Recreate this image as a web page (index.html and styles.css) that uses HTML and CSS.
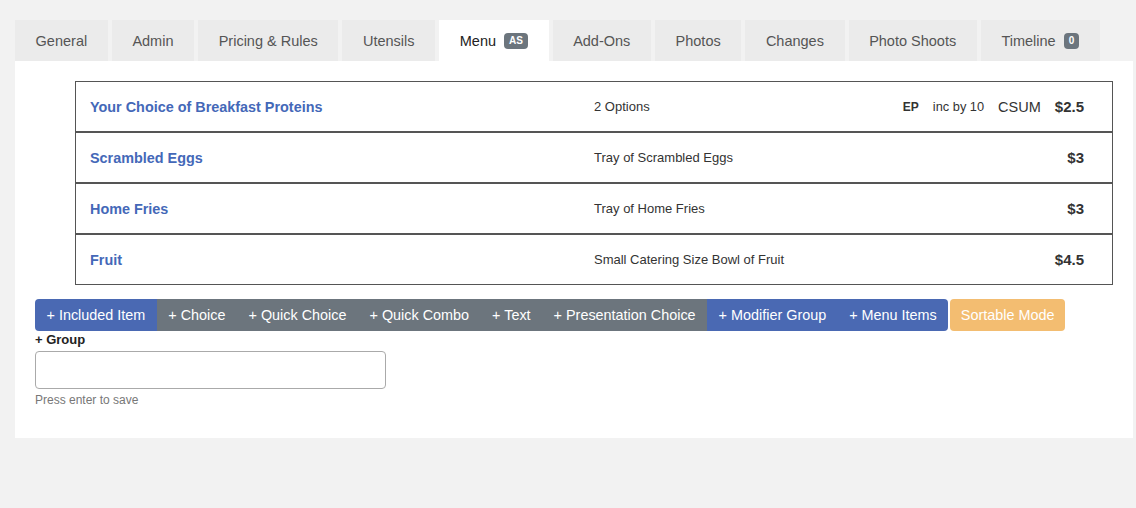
FILE: index.html
```html
<!DOCTYPE html>
<html>
<head>
<meta charset="utf-8">
<link rel="stylesheet" href="styles.css">
</head>
<body>
<div class="page">
  <div class="tabs">
    <div class="tab">General</div>
    <div class="tab">Admin</div>
    <div class="tab">Pricing &amp; Rules</div>
    <div class="tab">Utensils</div>
    <div class="tab active">Menu <span class="badge">AS</span></div>
    <div class="tab">Add-Ons</div>
    <div class="tab">Photos</div>
    <div class="tab">Changes</div>
    <div class="tab">Photo Shoots</div>
    <div class="tab">Timeline <span class="badge">0</span></div>
  </div>
  <div class="panel">
    <div class="items">
      <div class="row">
        <div class="name">Your Choice of Breakfast Proteins</div>
        <div class="desc">2 Options</div>
        <div class="meta">
          <span class="ep">EP</span>
          <span class="inc">inc by 10</span>
          <span class="csum">CSUM</span>
          <span class="price">$2.5</span>
        </div>
      </div>
      <div class="row">
        <div class="name">Scrambled Eggs</div>
        <div class="desc">Tray of Scrambled Eggs</div>
        <div class="meta"><span class="price">$3</span></div>
      </div>
      <div class="row">
        <div class="name">Home Fries</div>
        <div class="desc">Tray of Home Fries</div>
        <div class="meta"><span class="price">$3</span></div>
      </div>
      <div class="row">
        <div class="name">Fruit</div>
        <div class="desc">Small Catering Size Bowl of Fruit</div>
        <div class="meta"><span class="price">$4.5</span></div>
      </div>
    </div>
    <div class="actions">
      <div class="btn blue first">+ Included Item</div>
      <div class="btn gray">+ Choice</div>
      <div class="btn gray">+ Quick Choice</div>
      <div class="btn gray">+ Quick Combo</div>
      <div class="btn gray">+ Text</div>
      <div class="btn gray">+ Presentation Choice</div>
      <div class="btn blue">+ Modifier Group</div>
      <div class="btn blue last">+ Menu Items</div>
      <div class="btn orange">Sortable Mode</div>
    </div>
    <div class="group">
      <div class="group-label">+ Group</div>
      <input class="group-input" type="text">
      <div class="hint">Press enter to save</div>
    </div>
  </div>
</div>
</body>
</html>
```

FILE: styles.css
```css
* { box-sizing: border-box; }
html, body {
  margin: 0;
  background: #f2f2f2;
  font-family: "Liberation Sans", Arial, sans-serif;
  color: #333;
}
.page {
  padding: 20px 3px 0 15px;
  height: 508px;
}
.tabs {
  display: flex;
  gap: 4px;
  height: 41px;
}
.tab {
  display: flex;
  align-items: center;
  padding: 0 20.6px;
  background: #ebebeb;
  color: #555;
  font-size: 14.5px;
}
.tab.active {
  background: #fff;
  color: #222;
}
.badge {
  display: inline-block;
  margin-left: 8px;
  background: #6c757d;
  color: #fff;
  font-size: 10px;
  font-weight: bold;
  padding: 2px 5px;
  border-radius: 4px;
  line-height: 12px;
}
.panel {
  background: #fff;
  padding: 20px 20px 31px 20px;
}
.items {
  margin-left: 40px;
}
.row {
  display: flex;
  align-items: center;
  height: 51px;
  border: 1px solid #555;
}
.name {
  width: 50%;
  padding-left: 14px;
  color: #4468b8;
  font-weight: bold;
  font-size: 14.4px;
}
.desc {
  flex: 1;
  font-size: 13px;
  color: #333;
}
.meta {
  display: flex;
  align-items: center;
  padding-right: 28px;
  font-size: 14.5px;
}
.ep {
  font-size: 12px;
  font-weight: bold;
  margin-right: 14px;
}
.inc {
  font-size: 12.8px;
  margin-right: 14px;
}
.csum {
  margin-right: 14px;
}
.price {
  font-weight: bold;
  font-size: 15px;
}
.actions {
  display: flex;
  margin-top: 14px;
  height: 32px;
}
.btn {
  display: flex;
  align-items: center;
  padding: 0 11.5px;
  color: #fff;
  font-size: 14.4px;
}
.blue { background: #4a69b3; }
.gray { background: #6c757d; }
.first { border-radius: 4px 0 0 4px; }
.last { border-radius: 0 4px 4px 0; }
.orange {
  background: #f3bd71;
  border-radius: 4px;
  margin-left: 2px;
  padding: 0 10.5px;
}
.group-label {
  font-size: 13px;
  font-weight: bold;
  margin-top: 1px;
  color: #222;
}
.group-input {
  display: block;
  width: 351px;
  height: 38px;
  margin-top: 4px;
  border: 1px solid #aaa;
  border-radius: 4px;
  background: #fff;
}
.hint {
  font-size: 12px;
  color: #777;
  margin-top: 4px;
}
```
